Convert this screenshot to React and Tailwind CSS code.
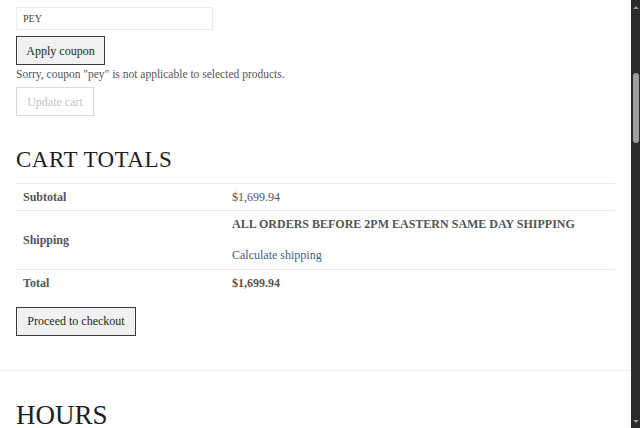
import React from 'react';

const Scrollbar = () => (
  <div className="w-[10px] h-[428px] bg-[#2b2b2b] flex flex-col items-center shrink-0">
    <div className="h-[14px] flex items-center justify-center">
      <div className="w-0 h-0 border-l-[3px] border-r-[3px] border-b-[3px] border-l-transparent border-r-transparent border-b-[#9a9a9a]" />
    </div>
    <div className="mt-[59px] w-[6px] h-[70px] rounded-[3px] bg-[#9f9f9f]" />
    <div className="flex-1" />
    <div className="h-[14px] flex items-center justify-center">
      <div className="w-0 h-0 border-l-[3px] border-r-[3px] border-t-[3px] border-l-transparent border-r-transparent border-t-[#9a9a9a]" />
    </div>
  </div>
);

const App = () => {
  return (
    <div className="flex w-[640px] h-[428px] overflow-hidden bg-white">
      <div className="flex-1 flex flex-col" style={{ fontFamily: '"Liberation Serif", serif' }}>
        <div className="px-4 pt-[7px]">
          {/* Coupon */}
          <div className="w-[197px] h-[23px] border border-[#ececec] flex items-center px-[6px] text-[10px] text-[#444]">
            PEY
          </div>
          <button className="mt-[6px] w-[89px] h-[29px] bg-[#f1f1f1] border border-[#3a3a3a] text-[12px] font-normal text-[#15291d] flex items-center justify-center">
            Apply coupon
          </button>
          <p className="mt-[1px] text-[11.5px] leading-[16px] text-[#555]">
            Sorry, coupon "pey" is not applicable to selected products.
          </p>
          <button className="mt-[5px] w-[78px] h-[29px] border border-[#d9d9d9] text-[12px] text-[#c4c4c4] flex items-center justify-center">
            Update cart
          </button>

          {/* Cart totals */}
          <h2 className="mt-[31px] text-[23px] leading-[26px] text-[#1e1e1e] tracking-[0.5px]">CART TOTALS</h2>
          <table className="mt-[10px] w-[599px] border-collapse text-[12px] text-[#555]">
            <tbody>
              <tr className="border-t border-[#ececec]">
                <th className="h-[27px] w-[216px] pl-[7px] text-left font-bold">Subtotal</th>
                <td className="h-[27px]">$1,699.94</td>
              </tr>
              <tr className="border-t border-[#ececec]">
                <th className="h-[58px] pl-[7px] text-left font-bold">Shipping</th>
                <td className="pt-[5px] pb-[6px] align-top">
                  <div className="font-bold leading-[16px]">ALL ORDERS BEFORE 2PM EASTERN SAME DAY SHIPPING</div>
                  <a className="block mt-[15px] leading-[16px] text-[#3d5f80]" href="#">Calculate shipping</a>
                </td>
              </tr>
              <tr className="border-t border-[#ececec]">
                <th className="h-[27px] pl-[7px] text-left font-bold">Total</th>
                <td className="h-[27px] font-bold">$1,699.94</td>
              </tr>
            </tbody>
          </table>
          <button className="mt-[10px] w-[120px] h-[29px] bg-[#f1f1f1] border border-[#3a3a3a] text-[12px] font-normal text-[#15291d] flex items-center justify-center">
            Proceed to checkout
          </button>
        </div>

        <div className="mt-[34px] border-t border-[#efefef]" />
        <h2 className="px-4 mt-[29px] text-[27px] leading-[30px] text-[#1e1e1e]">HOURS</h2>
      </div>
      <Scrollbar />
    </div>
  );
};

export default App;
